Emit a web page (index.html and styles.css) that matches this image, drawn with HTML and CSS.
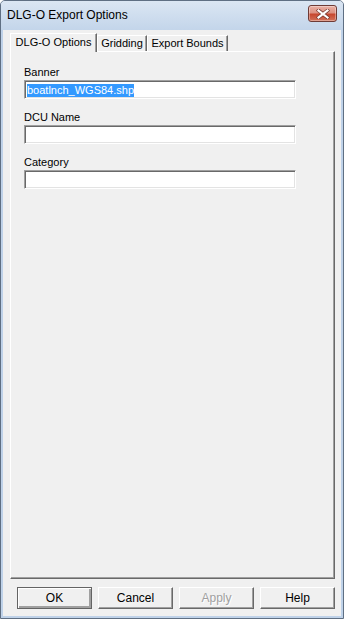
FILE: index.html
```html
<!DOCTYPE html>
<html>
<head>
<meta charset="utf-8">
<link rel="stylesheet" href="styles.css">
</head>
<body>
<div class="window">
  <div class="titlebar">
    <span class="title">DLG-O Export Options</span>
    <div class="close">
      <svg width="14" height="10" viewBox="0 0 14 10"><path d="M2.5 1.5 L11.5 8.5 M11.5 1.5 L2.5 8.5" stroke="#7a3a32" stroke-width="3.6" stroke-linecap="square"/><path d="M2.5 1.5 L11.5 8.5 M11.5 1.5 L2.5 8.5" stroke="#ffffff" stroke-width="2.2" stroke-linecap="square"/></svg>
    </div>
  </div>
  <div class="client">
    <div class="tabs">
      <div class="tab active">DLG-O Options</div>
      <div class="tab grid">Gridding</div>
      <div class="tab bounds">Export Bounds</div>
    </div>
    <div class="panel">
      <div class="field">
        <div class="label">Banner</div>
        <div class="input"><span class="sel">boatlnch_WGS84.shp</span></div>
      </div>
      <div class="field">
        <div class="label">DCU Name</div>
        <div class="input"></div>
      </div>
      <div class="field">
        <div class="label">Category</div>
        <div class="input"></div>
      </div>
    </div>
    <div class="buttons">
      <div class="btn default">OK</div>
      <div class="btn">Cancel</div>
      <div class="btn disabled">Apply</div>
      <div class="btn">Help</div>
    </div>
  </div>
</div>
</body>
</html>
```
FILE: styles.css
```css
html, body {
  margin: 0;
  padding: 0;
  background: #ffffff;
}
.window {
  width: 344px;
  height: 619px;
  box-sizing: border-box;
  border: 1px solid #5f6f83;
  border-radius: 5px 5px 0 0;
  background: #bfd2e9;
  display: flex;
  flex-direction: column;
  font-family: "Liberation Sans", Arial, sans-serif;
  font-size: 11px;
  color: #000;
}
.titlebar {
  height: 29px;
  flex: none;
  display: flex;
  align-items: flex-start;
  justify-content: space-between;
  background: linear-gradient(#dbe6f3, #c3d5ea);
  border-radius: 4px 4px 0 0;
}
.title {
  font-size: 12px;
  padding: 7px 0 0 6px;
  color: #000;
}
.close {
  margin: 4px 6px 0 0;
  width: 29px;
  height: 17px;
  box-sizing: border-box;
  border: 1px solid #6e3b36;
  border-radius: 3px;
  background: linear-gradient(#eab0a4 0%, #dc9182 45%, #c7472f 55%, #d2725a 100%);
  display: flex;
  align-items: center;
  justify-content: center;
  box-shadow: inset 0 0 0 1px rgba(255,255,255,0.35);
}
.client {
  flex: 1;
  margin: 0 2px 2px 2px;
  background: #f0f0f0;
  display: flex;
  flex-direction: column;
  padding: 3px 6px 0 7px;
}
.tabs {
  display: flex;
  align-items: flex-end;
  height: 18px;
  position: relative;
  z-index: 1;
}
.tab {
  height: 16px;
  box-sizing: border-box;
  padding: 1px 0 0 0;
  border-top: 1px solid #ffffff;
  border-left: 1px solid #ffffff;
  border-right: 1px solid #696969;
  box-shadow: inset -1px 0 0 #a0a0a0;
  background: #f0f0f0;
  line-height: 13px;
  white-space: nowrap;
  text-align: center;
}
.tab.active {
  width: 87px;
  height: 19px;
  margin-bottom: -1px;
  padding-top: 2px;
}
.tab.grid {
  width: 50px;
}
.tab.bounds {
  width: 81px;
}
.panel {
  height: 528px;
  box-sizing: border-box;
  border-top: 1px solid #ffffff;
  border-left: 1px solid #ffffff;
  border-right: 1px solid #696969;
  border-bottom: 1px solid #696969;
  box-shadow: inset -1px -1px 0 #a0a0a0;
  padding: 14px 0 0 13px;
  display: flex;
  flex-direction: column;
  gap: 12px;
}
.label {
  line-height: 13px;
  height: 13px;
}
.input {
  margin-top: 1px;
  width: 272px;
  height: 19px;
  box-sizing: border-box;
  border-top: 1px solid #a0a0a0;
  border-left: 1px solid #a0a0a0;
  border-right: 1px solid #ffffff;
  border-bottom: 1px solid #ffffff;
  box-shadow: inset 1px 1px 0 #696969, inset -1px -1px 0 #e3e3e3;
  background: #ffffff;
  padding: 3px 0 0 2px;
  line-height: 13px;
}
.sel {
  display: inline-block;
  background: #3399ff;
  color: #ffffff;
  height: 13px;
  line-height: 13px;
}
.buttons {
  display: flex;
  gap: 6px;
  margin-top: 8px;
  padding-left: 7px;
}
.btn {
  width: 75px;
  height: 22px;
  box-sizing: border-box;
  border-top: 1px solid #ffffff;
  border-left: 1px solid #ffffff;
  border-right: 1px solid #696969;
  border-bottom: 1px solid #696969;
  box-shadow: inset -1px -1px 0 #a0a0a0;
  display: flex;
  align-items: center;
  justify-content: center;
  font-size: 12px;
}
.btn.default {
  border: 1px solid #646464;
  box-shadow: inset 1px 1px 0 #ffffff, inset -2px -2px 0 #a0a0a0, inset -1px -1px 0 #696969;
}
.btn.disabled {
  color: #a0a0a0;
  text-shadow: 1px 1px 0 #ffffff;
}
```
